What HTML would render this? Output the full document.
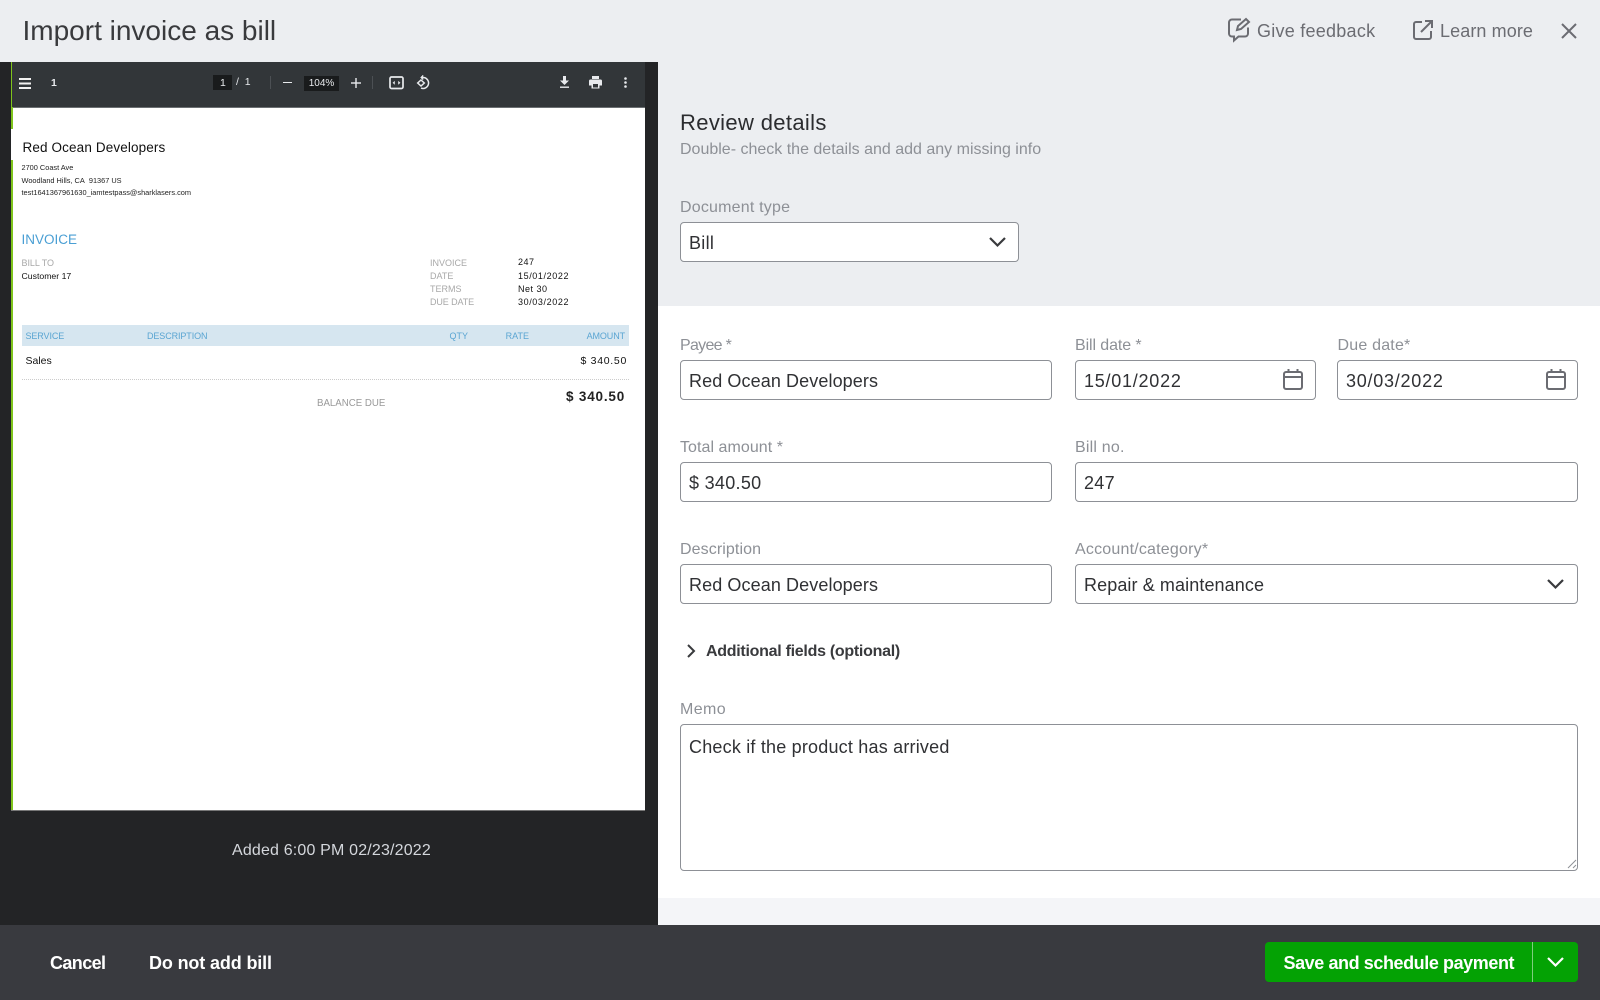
<!DOCTYPE html>
<html><head><meta charset="utf-8"><style>
html,body{margin:0;padding:0}
body{width:1600px;height:1000px;position:relative;overflow:hidden;background:#eceef1;font-family:"Liberation Sans",sans-serif;color:#393a3d}
.a{position:absolute}
.t{position:absolute;white-space:nowrap;line-height:20px;height:20px}
.r{transform:translateX(-100%)}
.lb{font-size:16px;color:#8d9096;letter-spacing:.2px}
.v{font-size:18px;color:#303134;letter-spacing:.1px}
.d{letter-spacing:.75px}
.n{letter-spacing:.3px}
.box{position:absolute;box-sizing:border-box;background:#fff;border:1px solid #8d9096;border-radius:4px}
.p7{font-size:7.37px;color:#222}
.p9{font-size:9px}
.g{color:#a8a8a8}.k{color:#111}.b{color:#5aa5d2}
svg{position:absolute;overflow:visible}
</style></head><body>
<div class="t" style="left:22.500px;top:21px;font-size:28px;line-height:20px;color:#393a3d">Import invoice as bill</div>

<svg style="left:1227px;top:17px" width="26" height="26" fill="none" stroke="#6b6c72" stroke-width="2"><path d="M14 2.500H5a3 3 0 0 0-3 3v11a3 3 0 0 0 3 3h2v4l4.500-4H18a3 3 0 0 0 3-3v-6"/><path d="M10 13l1-4 8-7 3 3-8 7z"/></svg>
<div class="t" style="left:1257px;top:21px;font-size:18px;color:#6b6c72;letter-spacing:.25px">Give feedback</div>
<svg style="left:1412px;top:19px" width="22" height="22" fill="none" stroke="#6b6c72" stroke-width="2"><path d="M10 3H4a2 2 0 0 0-2 2v13a2 2 0 0 0 2 2h13a2 2 0 0 0 2-2v-6"/><path d="M9 13L20 2M13 2h7v7"/></svg>
<div class="t" style="left:1440px;top:21px;font-size:18px;color:#6b6c72;letter-spacing:.1px">Learn more</div>
<svg style="left:1561px;top:23px" width="16" height="16" fill="none" stroke="#6b6c72" stroke-width="2"><path d="M1 1l14 14M15 1L1 15"/></svg>

<!-- left panel -->
<div class="a" style="left:0;top:62px;width:658px;height:863px;background:#232426"></div>
<div class="a" style="left:11px;top:62px;width:2px;height:748px;background:#7fc41c"></div>
<div class="a" style="left:12px;top:62px;width:633px;height:45px;background:#323639"></div>
<div class="a" style="left:11px;top:107px;width:634px;height:703px;background:#fff"></div>
<div class="a" style="left:12px;top:107px;width:633px;height:1px;background:#6b6f72"></div>
<div class="a" style="left:11px;top:810px;width:634px;height:1px;background:#777"></div>
<div class="a" style="left:11px;top:107px;width:2px;height:22px;background:#7fc41c"></div>
<div class="a" style="left:11px;top:160px;width:2px;height:650px;background:#7fc41c"></div>

<!-- toolbar -->
<svg style="left:18.500px;top:78px" width="13" height="11" fill="#f1f1f1"><rect width="12" height="2"/><rect y="4.500" width="12" height="2"/><rect y="9" width="12" height="2"/></svg>
<div class="t" style="left:51px;top:73px;font-size:10.500px;font-weight:bold;color:#e8eaed">1</div>
<div class="a" style="left:213px;top:75px;width:19px;height:15px;background:#191b1c"></div>
<div class="t" style="left:220px;top:73px;font-size:10.500px;color:#e8eaed">1</div>
<div class="t" style="left:236px;top:72px;font-size:10.500px;color:#e8eaed">/&nbsp;&nbsp;1</div>
<div class="a" style="left:270px;top:76px;width:1px;height:13px;background:#4c5054"></div>
<div class="a" style="left:283px;top:82px;width:9px;height:1.400px;background:#e8eaed"></div>
<div class="a" style="left:304px;top:76px;width:35px;height:15px;background:#191b1c"></div>
<div class="t" style="left:304px;top:74px;width:35px;text-align:center;font-size:10px;color:#e8eaed">104%</div>
<svg style="left:350.500px;top:78px" width="10" height="10" fill="#e8eaed"><rect y="4.300" width="10" height="1.400"/><rect x="4.300" width="1.400" height="10"/></svg>
<div class="a" style="left:372px;top:76px;width:1px;height:13px;background:#4c5054"></div>
<svg style="left:388.500px;top:76px" width="15" height="14" fill="none" stroke="#e8eaed" stroke-width="1.700"><rect x="1" y="1" width="13" height="11.500" rx="1.500"/><path d="M4 6.800l1.500-1.300v2.600zM11 6.800L9.500 5.500v2.600z" fill="#e8eaed" stroke-width=".6"/></svg>
<svg style="left:416px;top:74px" width="15" height="16" fill="none" stroke="#e8eaed" stroke-width="1.500"><path d="M7 3.500a5.500 5.500 0 1 1-2 10.600"/><path d="M7 1v5L4.500 3.500z" fill="#e8eaed" stroke-width=".5"/><path d="M5 6l3.300 3L5 12 1.700 9z"/></svg>
<svg style="left:560px;top:76px" width="9" height="12" fill="#e8eaed"><path d="M3 0h3v4.500h3L4.500 9 0 4.500h3z"/><rect y="10.500" width="9" height="1.400"/></svg>
<svg style="left:589px;top:76px" width="13" height="13" fill="#e8eaed"><path d="M3 0h7v3H3zM1.500 3.500h10a1.500 1.500 0 0 1 1.500 1.500v4.500h-2.500V12.500h-8V9.500H0V5a1.500 1.500 0 0 1 1.500-1.500z"/><rect x="4" y="8" width="5" height="3.500" fill="#323639"/></svg>
<svg style="left:624px;top:77px" width="3" height="12" fill="#e8eaed"><circle cx="1.500" cy="1.500" r="1.300"/><circle cx="1.500" cy="5.500" r="1.300"/><circle cx="1.500" cy="9.500" r="1.300"/></svg>

<!-- invoice -->
<div class="t" style="left:22.500px;top:138px;font-size:13.500px;color:#111;letter-spacing:.13px">Red Ocean Developers</div>
<div class="t p7" style="left:21.500px;top:158px">2700 Coast Ave</div>
<div class="t p7" style="left:21.500px;top:170.500px">Woodland Hills, CA&nbsp; 91367 US</div>
<div class="t p7" style="left:21.500px;top:182.500px">test1641367961630_iamtestpass@sharklasers.com</div>
<div class="t" style="left:21.500px;top:230px;font-size:13.500px;color:#4a9fd4">INVOICE</div>
<div class="t p9 g" style="left:21.500px;top:253px;letter-spacing:-.05px">BILL TO</div>
<div class="t p9 k" style="left:21.500px;top:266px;font-size:8.700px">Customer 17</div>
<div class="t p9 g" style="left:430px;top:253px">INVOICE</div>
<div class="t p9 g" style="left:430px;top:266px">DATE</div>
<div class="t p9 g" style="left:430px;top:279px">TERMS</div>
<div class="t p9 g" style="left:430px;top:292px;letter-spacing:-.1px">DUE DATE</div>
<div class="t p9 k" style="left:518px;top:252px;letter-spacing:.5px">247</div>
<div class="t p9 k" style="left:518px;top:266px;letter-spacing:.6px">15/01/2022</div>
<div class="t p9 k" style="left:518px;top:279px;letter-spacing:.5px">Net 30</div>
<div class="t p9 k" style="left:518px;top:292px;letter-spacing:.6px">30/03/2022</div>
<div class="a" style="left:22px;top:324.500px;width:607px;height:21.500px;background:#d6e6f0"></div>
<div class="t p9 b" style="left:25.500px;top:326px;letter-spacing:-.1px">SERVICE</div>
<div class="t p9 b" style="left:147px;top:326px;letter-spacing:-.1px">DESCRIPTION</div>
<div class="t p9 b r" style="left:468px;top:326px">QTY</div>
<div class="t p9 b r" style="left:529px;top:326px">RATE</div>
<div class="t p9 b r" style="left:625px;top:326px;letter-spacing:-.1px">AMOUNT</div>
<div class="t k" style="left:25.500px;top:351px;font-size:10.500px">Sales</div>
<div class="t k r" style="left:627px;top:351px;font-size:10.500px;letter-spacing:.7px">$ 340.50</div>
<div class="a" style="left:22px;top:379px;width:607px;border-top:1px dotted #ccc"></div>
<div class="t g" style="left:317px;top:394px;font-size:9.700px;color:#999">BALANCE DUE</div>
<div class="t r" style="left:625px;top:387px;font-size:13.500px;font-weight:bold;color:#222;letter-spacing:.8px">$ 340.50</div>
<div class="t" style="left:232px;top:841px;font-size:16px;color:#d4d7dc;letter-spacing:.17px">Added 6:00 PM 02/23/2022</div>

<!-- right panel -->
<div class="a" style="left:658px;top:306px;width:942px;height:592px;background:#fff"></div>
<div class="a" style="left:658px;top:898px;width:942px;height:27px;background:#f4f5f8"></div>
<div class="t" style="left:680px;top:113px;font-size:22px;color:#2b2c2f;letter-spacing:.35px">Review details</div>
<div class="t" style="left:680px;top:140px;font-size:16px;color:#8d9096">Double- check the details and add any missing info</div>

<div class="t lb" style="left:680px;top:198px">Document type</div>
<div class="box" style="left:680px;top:222px;width:339px;height:40px"></div>
<div class="t v" style="left:689px;top:233px;letter-spacing:.3px">Bill</div>
<svg style="left:989px;top:237px" width="17" height="10" fill="none" stroke="#393a3d" stroke-width="2.200"><path d="M1 1l7.500 7.500L16 1"/></svg>

<div class="t lb" style="left:680px;top:336px;letter-spacing:-.7px">Payee *</div>
<div class="box" style="left:680px;top:360px;width:372px;height:40px"></div>
<div class="t v" style="left:689px;top:371px">Red Ocean Developers</div>

<div class="t lb" style="left:1075px;top:336px;letter-spacing:-.1px">Bill date *</div>
<div class="box" style="left:1075px;top:360px;width:240.500px;height:40px"></div>
<div class="t v d" style="left:1084px;top:371px">15/01/2022</div>
<svg style="left:1283px;top:369px" width="20" height="21" fill="none" stroke="#6b6c72" stroke-width="2"><rect x="1" y="3" width="18" height="17" rx="2"/><path d="M1 8h18M5.500 0v3M14.500 0v3"/></svg>

<div class="t lb" style="left:1337.500px;top:336px">Due date*</div>
<div class="box" style="left:1337px;top:360px;width:241px;height:40px"></div>
<div class="t v d" style="left:1346px;top:371px">30/03/2022</div>
<svg style="left:1546px;top:369px" width="20" height="21" fill="none" stroke="#6b6c72" stroke-width="2"><rect x="1" y="3" width="18" height="17" rx="2"/><path d="M1 8h18M5.500 0v3M14.500 0v3"/></svg>

<div class="t lb" style="left:680px;top:438px;letter-spacing:.05px">Total amount *</div>
<div class="box" style="left:680px;top:462px;width:372px;height:40px"></div>
<div class="t v n" style="left:689px;top:473px">$ 340.50</div>

<div class="t lb" style="left:1075px;top:438px">Bill no.</div>
<div class="box" style="left:1075px;top:462px;width:503px;height:40px"></div>
<div class="t v n" style="left:1084px;top:473px">247</div>

<div class="t lb" style="left:680px;top:540px;letter-spacing:.1px">Description</div>
<div class="box" style="left:680px;top:564px;width:372px;height:40px"></div>
<div class="t v" style="left:689px;top:575px">Red Ocean Developers</div>

<div class="t lb" style="left:1075px;top:540px">Account/category*</div>
<div class="box" style="left:1075px;top:564px;width:503px;height:40px"></div>
<div class="t v" style="left:1084px;top:575px">Repair &amp; maintenance</div>
<svg style="left:1547px;top:579px" width="17" height="10" fill="none" stroke="#393a3d" stroke-width="2.200"><path d="M1 1l7.500 7.500L16 1"/></svg>

<svg style="left:687px;top:644px" width="8" height="14" fill="none" stroke="#393a3d" stroke-width="2"><path d="M1 1l6 6-6 6"/></svg>
<div class="t" style="left:706px;top:642px;font-size:16px;font-weight:bold;color:#393a3d;letter-spacing:-.28px">Additional fields (optional)</div>

<div class="t lb" style="left:680px;top:700px;letter-spacing:.4px">Memo</div>
<div class="box" style="left:680px;top:724px;width:898px;height:147px"></div>
<div class="t v" style="left:689px;top:737px;letter-spacing:.2px">Check if the product has arrived</div>
<svg style="left:1568px;top:860px" width="9" height="9" fill="none" stroke="#8d9096" stroke-width="1"><path d="M0 8l8-8M5 8l3-3"/></svg>

<!-- footer -->
<div class="a" style="left:0;top:924.500px;width:1600px;height:75.500px;background:#393a3f"></div>
<div class="t" style="left:50px;top:953px;font-size:18px;font-weight:bold;color:#fff;letter-spacing:-.6px">Cancel</div>
<div class="t" style="left:149px;top:953px;font-size:18px;font-weight:bold;color:#fff;letter-spacing:-.14px">Do not add bill</div>
<div class="a" style="left:1265px;top:942px;width:313px;height:40px;background:#04a204;border-radius:4px"></div>
<div class="a" style="left:1532px;top:942px;width:1px;height:40px;background:#7fce7f"></div>
<div class="t" style="left:1283.500px;top:953px;font-size:18px;font-weight:bold;color:#fff;letter-spacing:-.42px">Save and schedule payment</div>
<svg style="left:1547px;top:957px" width="17" height="10" fill="none" stroke="#fff" stroke-width="2.200"><path d="M1 1l7.500 7.500L16 1"/></svg>
</body></html>
